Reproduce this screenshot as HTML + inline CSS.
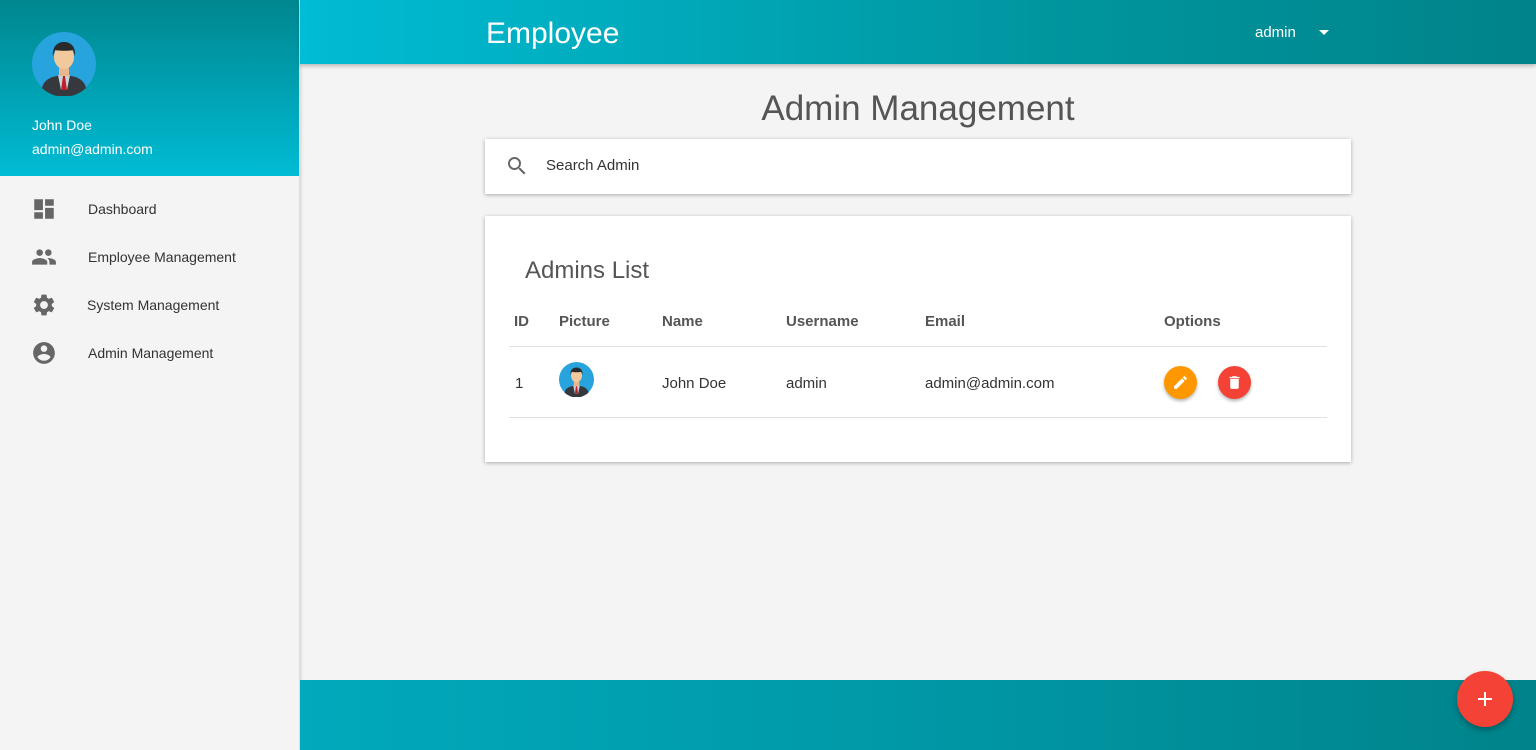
<!DOCTYPE html>
<html><head><meta charset="utf-8"><style>
*{margin:0;padding:0;box-sizing:border-box}
body{width:1536px;height:750px;overflow:hidden;background:#f4f4f4;font-family:"Liberation Sans",sans-serif;position:relative;color:#333}
.side{position:absolute;left:0;top:0;width:300px;height:750px;background:#f4f4f4;border-right:1px solid #ddd;box-shadow:1px 0 3px rgba(0,0,0,.15)}
.prof{height:176px;background:linear-gradient(180deg,#00878f 0%,#00a3b5 55%,#00bcd4 100%);position:relative;color:#fff}
.prof .av{position:absolute;left:32px;top:32px}
.prof .n{position:absolute;left:32px;top:117px;font-size:14px}
.prof .e{position:absolute;left:32px;top:141px;font-size:14px}
.mi{position:absolute;left:0;height:24px;font-size:14px;color:#333}
.mi svg{position:absolute;left:31px;top:-1px}
.mi span{position:absolute;left:88px;top:4px;white-space:nowrap}
.hdr{position:absolute;left:300px;top:0;width:1236px;height:64px;background:linear-gradient(90deg,#00bcd4,#00969f 60%,#00838a);box-shadow:0 2px 4px rgba(0,0,0,.25);color:#fff}
.hdr .t{position:absolute;left:186px;top:17px;font-size:30px}
.hdr .u{position:absolute;left:955px;top:24px;font-size:15px}
.ftr{position:absolute;left:300px;top:680px;width:1236px;height:70px;background:linear-gradient(90deg,#00a9bc,#0098a6 50%,#00838a)}
h1{position:absolute;left:485px;width:866px;top:89px;text-align:center;font-weight:normal;font-size:35px;color:#555}
.card{position:absolute;background:#fff;box-shadow:0 1px 4px rgba(0,0,0,.3)}
.th{position:absolute;top:313px;font-weight:bold;font-size:15px;color:#555}
.td{position:absolute;top:375px;font-size:15px;color:#333}
.line{position:absolute;left:509px;width:818px;height:1px;background:#e0e0e0}
.btn{position:absolute;width:33px;height:33px;border-radius:50%;box-shadow:0 2px 3px rgba(0,0,0,.3)}
</style></head><body>
<svg width="0" height="0" style="position:absolute"><defs>
<symbol id="av" viewBox="0 0 64 64"><circle cx="32" cy="32" r="32" fill="#27a3dd"/><path d="M10 56c2-9 10-12 22-13 12 1 20 4 22 13a32 32 0 0 1-44 0z" fill="#35383d"/><path d="M26 43h12l-3 15h-6z" fill="#c9d3dc"/><path d="M31 44h2l2 14h-6z" fill="#c0202a"/><rect x="27" y="34" width="10" height="10" fill="#e8b88d"/><ellipse cx="32" cy="25" rx="10" ry="12" fill="#f2c99c"/><path d="M21 24c-1-10 5-14 11-14s12 4 11 14l-2-6c-3 1-14 1-18 0z" fill="#2a2a2a"/></symbol>
</defs></svg>
<div class="side">
 <div class="prof"><svg class="av" width="64" height="64"><use href="#av"/></svg><div class="n">John Doe</div><div class="e">admin@admin.com</div></div>
 <div class="mi" style="top:197px"><svg width="26" height="26" viewBox="0 0 24 24"><path fill="#666" d="M3 13h8V3H3v10zm0 8h8v-6H3v6zm10 0h8V11h-8v10zm0-18v6h8V3h-8z"/></svg><span>Dashboard</span></div>
 <div class="mi" style="top:245px"><svg width="26" height="26" viewBox="0 0 24 24"><path fill="#666" d="M16 11c1.66 0 2.99-1.34 2.99-3S17.66 5 16 5c-1.66 0-3 1.34-3 3s1.34 3 3 3zm-8 0c1.66 0 2.99-1.34 2.99-3S9.66 5 8 5C6.34 5 5 6.34 5 8s1.34 3 3 3zm0 2c-2.33 0-7 1.17-7 3.5V19h14v-2.5c0-2.330-4.67-3.5-7-3.5zm8 0c-.29 0-.62.02-.97.05 1.16.84 1.97 1.97 1.97 3.45V19h6v-2.5c0-2.33-4.67-3.5-7-3.5z"/></svg><span>Employee Management</span></div>
 <div class="mi" style="top:293px"><svg width="26" height="26" viewBox="0 0 24 24"><path fill="#666" d="M19.14 12.94c.04-.3.06-.61.06-.94 0-.32-.02-.64-.07-.94l2.03-1.58a.49.49 0 0 0 .12-.61l-1.92-3.32a.49.49 0 0 0-.59-.22l-2.39.96c-.5-.38-1.030-.7-1.62-.94l-.36-2.54a.48.48 0 0 0-.48-.41h-3.84c-.24 0-.43.17-.47.41l-.36 2.54c-.59.24-1.13.57-1.62.94l-2.39-.96a.49.49 0 0 0-.59.22L2.74 8.87c-.12.21-.08.47.12.61l2.03 1.58c-.05.3-.09.63-.09.94s.02.64.07.94l-2.03 1.58a.49.49 0 0 0-.12.61l1.92 3.32c.12.22.37.29.59.22l2.39-.96c.5.38 1.03.7 1.62.94l.36 2.54c.05.24.24.41.48.41h3.84c.24 0 .44-.17.47-.41l.36-2.54c.59-.24 1.13-.56 1.62-.94l2.39.96c.22.08.47 0 .59-.22l1.92-3.32c.12-.22.07-.47-.12-.61l-2.01-1.58zM12 15.6c-1.98 0-3.6-1.62-3.6-3.6s1.62-3.6 3.6-3.6 3.6 1.62 3.6 3.6-1.62 3.6-3.6 3.6z"/></svg><span style="left:87px">System Management</span></div>
 <div class="mi" style="top:341px"><svg width="26" height="26" viewBox="0 0 24 24"><path fill="#666" d="M12 2C6.48 2 2 6.48 2 12s4.48 10 10 10 10-4.48 10-10S17.52 2 12 2zm0 3c1.66 0 3 1.34 3 3s-1.34 3-3 3-3-1.34-3-3 1.34-3 3-3zm0 14.2c-2.5 0-4.71-1.28-6-3.22.03-1.99 4-3.08 6-3.08 1.99 0 5.97 1.09 6 3.08-1.29 1.94-3.5 3.22-6 3.22z"/></svg><span>Admin Management</span></div>
</div>
<div class="hdr"><div class="t">Employee</div><div class="u">admin</div><svg style="position:absolute;left:1018px;top:29px" width="12" height="8" viewBox="0 0 12 8"><path d="M1 1h10L6 6z" fill="#fff"/></svg></div>
<div class="ftr"></div>
<h1>Admin Management</h1>
<div class="card" style="left:485px;top:139px;width:866px;height:55px">
 <svg style="position:absolute;left:20px;top:15px" width="24" height="24" viewBox="0 0 24 24"><path fill="#666" d="M15.5 14h-.79l-.28-.27A6.47 6.47 0 0 0 16 9.5 6.5 6.5 0 1 0 9.5 16c1.61 0 3.09-.59 4.23-1.57l.27.28v.79l5 4.99L20.49 19l-4.99-5zm-6 0C7.01 14 5 11.99 5 9.5S7.01 5 9.5 5 14 7.01 14 9.5 11.990 14 9.5 14z"/></svg>
 <div style="position:absolute;left:61px;top:18px;font-size:15px;color:#333">Search Admin</div>
</div>
<div class="card" style="left:485px;top:216px;width:866px;height:246px"></div>
<div style="position:absolute;left:525px;top:257px;font-size:24px;color:#555">Admins List</div>
<div class="th" style="left:514px">ID</div><div class="th" style="left:559px">Picture</div><div class="th" style="left:662px">Name</div><div class="th" style="left:786px">Username</div><div class="th" style="left:925px">Email</div><div class="th" style="left:1164px">Options</div>
<div class="line" style="top:346px"></div><div class="line" style="top:417px"></div>
<div class="td" style="left:515px">1</div>
<svg style="position:absolute;left:559px;top:362px" width="35" height="35"><use href="#av"/></svg>
<div class="td" style="left:662px">John Doe</div><div class="td" style="left:786px">admin</div><div class="td" style="left:925px">admin@admin.com</div>
<div class="btn" style="left:1164px;top:366px;background:#ff9800"><svg style="position:absolute;left:8px;top:8px" width="17" height="17" viewBox="0 0 24 24"><path fill="#fff" d="M3 17.25V21h3.75L17.81 9.94l-3.75-3.75L3 17.25zM20.71 7.04a1 1 0 0 0 0-1.41l-2.34-2.34a1 1 0 0 0-1.41 0l-1.83 1.83 3.75 3.75 1.83-1.83z"/></svg></div>
<div class="btn" style="left:1218px;top:366px;background:#f44336"><svg style="position:absolute;left:8px;top:8px" width="17" height="17" viewBox="0 0 24 24"><path fill="#fff" d="M6 19c0 1.1.9 2 2 2h8c1.1 0 2-.9 2-2V7H6v12zM19 4h-3.5l-1-1h-5l-1 1H5v2h14V4z"/></svg></div>
<div class="btn" style="left:1457px;top:671px;width:56px;height:56px;background:#f44336;box-shadow:0 3px 6px rgba(0,0,0,.3)"><svg style="position:absolute;left:20px;top:20px" width="16" height="16" viewBox="0 0 16 16"><path d="M7 1h2v14H7zM1 7h14v2H1z" fill="#fff"/></svg></div>
</body></html>
